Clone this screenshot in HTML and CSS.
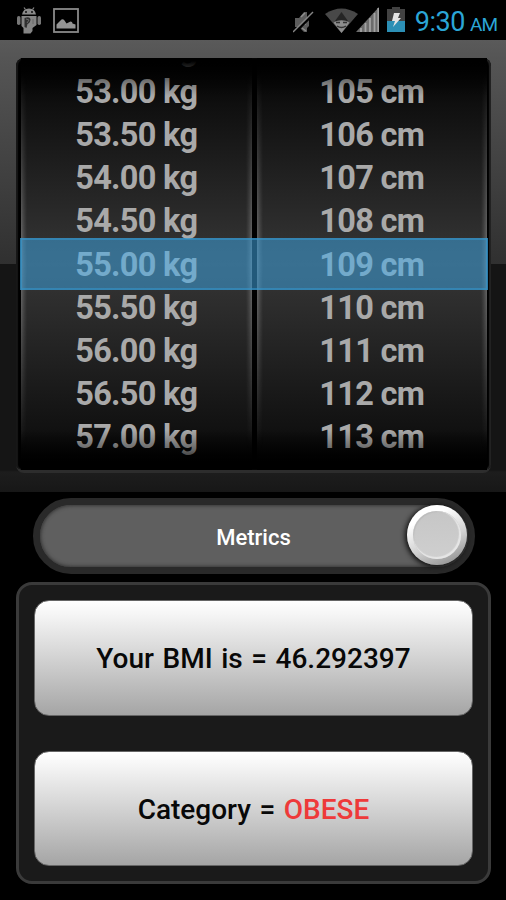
FILE: index.html
```
<!DOCTYPE html>
<html lang="en">
<head>
  <meta charset="UTF-8" />
  <title>BMI Calculator</title>
  <meta name="viewport" content="width=device-width, initial-scale=1.0" />
  <link rel="stylesheet" href="styles.css">
</head>
<body>
  <header class="status">
    <svg class="icon-debug" width="24" height="27" viewBox="0 0 24 27">
      <path d="M7 .5l1.500 2M17 .5l-1.500 2" stroke="#888" stroke-width="1.2" />
      <path d="M5 7.500q1-6 7-6t7 6z" fill="#8a8a8a" />
      <circle cx="9" cy="5" r="1" fill="#111" />
      <circle cx="15" cy="5" r="1" fill="#111" />
      <rect x="0" y="9" width="3.500" height="9" rx="1.700" fill="#777" />
      <rect x="20.500" y="9" width="3.500" height="9" rx="1.700" fill="#777" />
      <path d="M4.500 9h15v9l-4 3v3l-2 2.500H6.500V21l-2-2z" fill="#858585" />
      <path d="M7.500 11q5-2 6 1 0 4-3 5l-1 4-2-1z" fill="#303030" />
      <path d="M9 12l3 1-2 3M16 12v5" fill="none" stroke="#686868" />
    </svg>
    <svg class="icon-picture" width="26" height="25" viewBox="0 0 26 25">
      <rect x="1" y="1" width="24" height="23" fill="none" stroke="#8a8a8a" stroke-width="1.8" />
      <path d="M3.500 20.500v-4l3-3 2-2q1.500-1 3 1l2 3 4-2q2 0 2 2l3 1v4z" fill="#949494" />
    </svg>
    <span class="spacer"></span>
    <svg class="icon-mute" width="22" height="22" viewBox="0 0 22 22">
      <path d="M2 7h4l5-6h3v5l2 3v6l-2 2v4h-3l-5-5H2z" fill="#5c5c5c" />
      <path d="M8 6l4-4M9 17l4 3M12 9v5" stroke="#8d8d8d" stroke-width="1.5" />
      <path d="M1.500 22L21.500 2" stroke="#000" stroke-width="2.500" />
      <path d="M0 21L20 1" stroke="#858585" stroke-width="1.5" />
    </svg>
    <svg class="icon-wifi" width="33" height="25" viewBox="0 0 33 25">
      <path d="M0 6Q16.500-5 33 6L16.500 25z" fill="#484848" />
      <path d="M10 13l6.500-9 6.500 9z" fill="#252525" />
      <path d="M8.500 14.500q8-4.500 16 0L16.500 25z" fill="#8d8d8d" />
      <path d="M11 14.500h4M18 14.500h4M12 18q4.500 3 9 0" stroke="#333" stroke-width="1.500" fill="none" />
    </svg>
    <svg class="icon-signal" width="23" height="25" viewBox="0 0 23 25">
      <path d="M0 25L23 0v25z" fill="#6c6c6c" />
      <path d="M5 25v-4M9.500 25V16M14 25V11M18.500 25V6M22.300 25V1" stroke="#a2a2a2" stroke-width="1.800" />
    </svg>
    <svg class="icon-battery" width="18" height="25" viewBox="0 0 18 25">
      <path d="M5 0h8v2h5v23H0V2h5z" fill="#424242" />
      <path d="M0 14h18v11H0z" fill="#2c8fb5" />
      <path d="M7 6h6l-2 5h3L6 20l2-6H5z" fill="#e4e4e4" />
    </svg>
    <span class="clock">9:30 <small>AM</small></span>
  </header>

  <section class="picker">
    <div class="wheels">
      <ul class="wheel">
        <li>52.50 kg</li>
        <li>53.00 kg</li>
        <li>53.50 kg</li>
        <li>54.00 kg</li>
        <li>54.50 kg</li>
        <li class="current">55.00 kg</li>
        <li>55.50 kg</li>
        <li>56.00 kg</li>
        <li>56.50 kg</li>
        <li>57.00 kg</li>
      </ul>
      <ul class="wheel">
        <li>105 cm</li>
        <li>106 cm</li>
        <li>107 cm</li>
        <li>108 cm</li>
        <li class="current">109 cm</li>
        <li>110 cm</li>
        <li>111 cm</li>
        <li>112 cm</li>
        <li>113 cm</li>
      </ul>
      <div class="selection"></div>
    </div>
  </section>

  <div class="switch">
    <span class="switch-label">Metrics</span>
    <span class="knob"></span>
  </div>

  <section class="results">
    <div class="card"><span class="bmi">Your BMI is = 46.292397</span></div>
    <div class="card"><span class="category">Category = <b>OBESE</b></span></div>
  </section>
</body>
</html>
```
FILE: styles.css
```
* {
  box-sizing: border-box;
}

body {
  margin: 0;
  height: 900px;
  overflow: hidden;
  background: #000;
  font-family: Roboto, sans-serif;
}

/* status bar */
.status {
  display: flex;
  align-items: flex-start;
  height: 40px;
  padding: 7px 9px 0 17px;
}

.icon-picture {
  margin: 1px 0 0 12px;
}

.spacer {
  flex: 1;
}

.icon-mute {
  margin: 4px 10px 0 0;
}

.icon-wifi {
  margin-top: 1px;
}

.icon-signal {
  margin: 0 8px 0 -2px;
}

.icon-battery {
  margin-right: 10px;
}

.clock {
  color: #2ba6d6;
  font-size: 27px;
  line-height: 30px;
  letter-spacing: -.5px;
  white-space: nowrap;
}

.clock small {
  font-size: 19px;
  letter-spacing: -1px;
  margin-left: -1px;
}

/* weight and height wheels */
.picker {
  height: 452px;
  padding: 18px 15px 0 16px;
  background: linear-gradient(#5a5a5a 0, #555 18px, #303030 224px, #151515 224px, #151515 430px, #1d1d1d 432px, #171717 100%);
}

.wheels {
  position: relative;
  display: flex;
  gap: 5px;
  height: 415px;
  padding: 0 4px 0 5px;
  border-radius: 8px;
  background: #000;
  border-bottom: 3px solid #2d2d2d;
  box-shadow: inset 2px 0 1px #171717, inset -2px 0 1px #222;
}

.wheel {
  flex: 1;
  display: flex;
  flex-direction: column;
  justify-content: flex-end;
  margin: 0;
  padding: 0 0 10.5px;
  list-style: none;
  overflow: hidden;
  position: relative;
  background: linear-gradient(#000 0, #101010 12%, #363636 50%, #111 90%, #000 98%);
}

.wheel li {
  flex: none;
  height: 43.2px;
  line-height: 43.2px;
  text-align: center;
  font-size: 32.5px;
  font-weight: bold;
  letter-spacing: -.7px;
  color: #a9a9a9;
}

.wheel .current {
  color: #bdbdbd;
}

.wheel::before {
  content: "";
  position: absolute;
  inset: 0;
  background:
    linear-gradient(90deg, rgba(150, 150, 150, .6), rgba(110, 110, 110, .4) 3px, rgba(60, 60, 60, 0) 6px, rgba(60, 60, 60, 0) calc(100% - 6px), rgba(110, 110, 110, .4) calc(100% - 3px), rgba(150, 150, 150, .6));
  -webkit-mask-image: linear-gradient(transparent 3%, #000 50%, transparent 95%);
  mask-image: linear-gradient(transparent 3%, #000 50%, transparent 95%);
}

/* fade at both ends */
.wheel::after {
  content: "";
  position: absolute;
  inset: 0;
  background: linear-gradient(#000 0, #000 3px, rgba(0, 0, 0, .8) 9px, rgba(0, 0, 0, .3) 24px, rgba(0, 0, 0, 0) 38px, rgba(0, 0, 0, 0) 372px, rgba(0, 0, 0, .4) 392px, #000 409px);
}

.selection {
  position: absolute;
  left: 4px;
  right: 3px;
  top: 180px;
  height: 52px;
  border: 2px solid rgba(51, 148, 201, .6);
  background: rgba(60, 157, 215, .57);
}

/* unit switch */
.switch {
  display: flex;
  align-items: center;
  width: 442px;
  height: 76px;
  margin: 6px auto 0 33px;
  border: 7px solid #292929;
  border-radius: 38px;
  background: #5f5f5f;
  box-shadow: inset 0 0 4px #222;
}

.switch-label {
  flex: 1;
  padding: 2px 0 0 60px;
  text-align: center;
  color: #fff;
  font-size: 22px;
  font-weight: 500;
}

.knob {
  width: 60px;
  height: 60px;
  margin: -2px 1px 0 0;
  padding: 6px;
  border-radius: 50%;
  background: linear-gradient(155deg, #fff 25%, #d0d0d0 60%, #8c8c8c 95%);
  box-shadow: -1px 1px 5px 1px #111;
}

.knob::before {
  content: "";
  display: block;
  height: 48px;
  border-radius: 50%;
  background: linear-gradient(#c6c6c6, #cfcfcf);
  box-shadow: inset -1px -1px 1px 1px #e6e6e6, inset 1px 1px 1px #bababa;
}

/* result cards */
.results {
  display: flex;
  flex-direction: column;
  gap: 35px;
  width: 475px;
  height: 302px;
  margin: 8px 0 0 16px;
  padding: 15px;
  border: 3px solid #3a3a3a;
  border-radius: 16px;
  background: #1a1a1a;
}

.card {
  display: flex;
  align-items: center;
  justify-content: center;
  height: 116px;
  padding-top: 2px;
  border: 1px solid #666;
  border-radius: 15px;
  background: linear-gradient(#fff 0, #f5f5f5 12%, #a5a5a5 100%);
  color: #080808;
  font-size: 28px;
  font-weight: 500;
  word-spacing: 1.6px;
}

.card b {
  color: #ee3a3a;
  font-weight: 500;
}
```
